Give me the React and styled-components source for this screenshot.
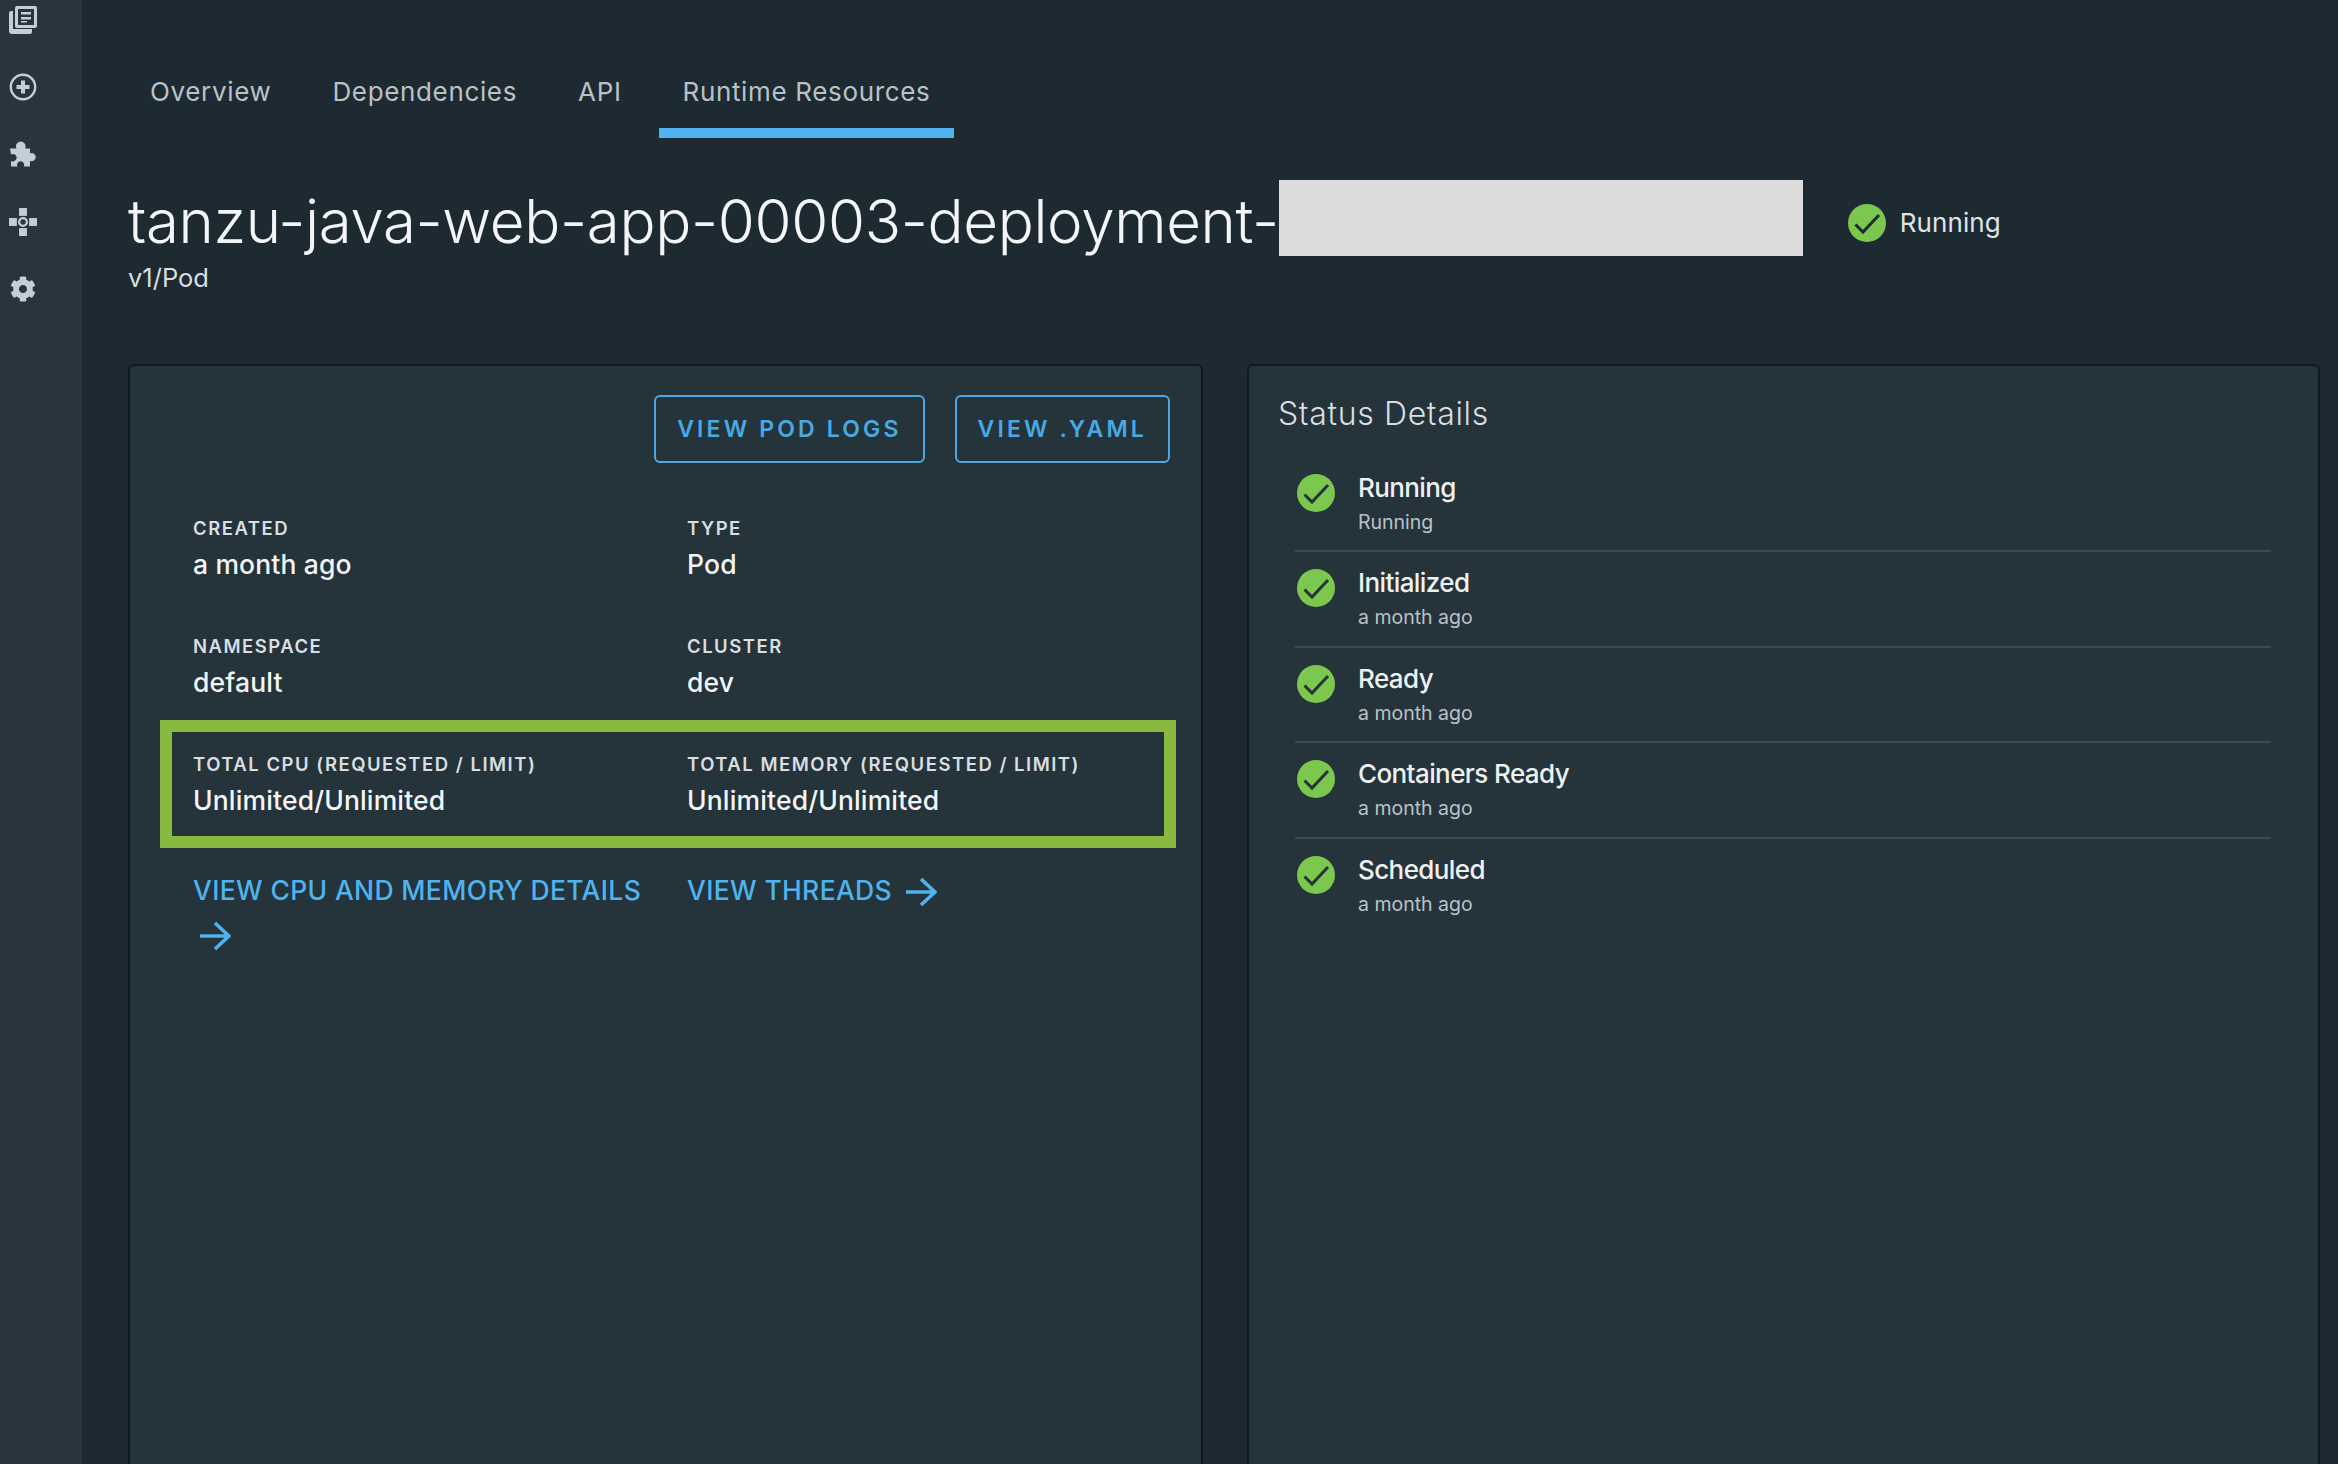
import React from "react";
import styled, { createGlobalStyle } from "styled-components";
import { FaCog } from "react-icons/fa";

const Global = createGlobalStyle`
  html, body { margin: 0; padding: 0; background: #1e2a32; }
  * { box-sizing: border-box; }
`;

const Shell = styled.div`
  display: flex;
  width: 2338px;
  height: 1464px;
  overflow: hidden;
  background: #1e2a32;
  font-family: "Inter", "Liberation Sans", sans-serif;
  color: #e6eaec;
`;
const Sidebar = styled.nav`
  flex: 0 0 82px;
  background: #28353c;
  padding: 6px 0 0 9px;
  display: flex;
  flex-direction: column;
  gap: 39.2px;
  color: #c3ced6;
`;
const SideIcon = styled.div`
  width: 28px;
  height: 28px;
  display: flex;
  align-items: center;
  justify-content: center;
`;
const Main = styled.main`
  flex: 1;
  min-width: 0;
  padding: 0 18px 0 46px;
`;
const Tabs = styled.div`
  display: flex;
  gap: 13px;
  padding-top: 75px;
  margin-left: -2px;
`;
const Tab = styled.div`
  padding: 0 24px 19px;
  font-size: 26px;
  line-height: 34px;
  font-weight: 400;
  letter-spacing: 0.65px;
  color: #b9c2c7;
  border-bottom: 10px solid ${p => (p.$active ? "#4fb3ef" : "transparent")};
`;
const TitleRow = styled.div`
  display: flex;
  align-items: center;
  margin-top: 42px;
  height: 76px;
`;
const Title = styled.h1`
  margin: 6px 0 0;
  font-size: 60px;
  line-height: 76px;
  font-weight: 300;
  letter-spacing: -0.35px;
  color: #f3f5f6;
  white-space: nowrap;
`;
const Redacted = styled.div`
  width: 524px;
  height: 76px;
  background: #dcdcdc;
  flex: none;
`;
const StatusBadge = styled.div`
  display: flex;
  align-items: center;
  gap: 14px;
  margin: 10px 0 0 45px;
  font-size: 26px;
  line-height: 34px;
  letter-spacing: 0.1px;
  color: #dfe4e7;
`;
const Kind = styled.div`
  margin-top: 6px;
  font-size: 25.5px;
  line-height: 32px;
  color: #d8dee1;
`;
const Panels = styled.div`
  display: grid;
  grid-template-columns: 1075px 1073px;
  gap: 44px;
  margin-top: 70px;
`;
const Panel = styled.section`
  background: #25333b;
  border: 2px solid #10191f;
  border-radius: 6px;
  height: 1200px;
`;
const LeftPanel = styled(Panel)`
  padding: 29px 31px 0 31px;
`;
const RightPanel = styled(Panel)`
  padding: 28px 47px 0 29px;
`;
const Actions = styled.div`
  display: flex;
  justify-content: flex-end;
  gap: 30px;
`;
const OutlineButton = styled.button`
  height: 68px;
  padding: 0 21px;
  background: transparent;
  border: 2px solid #49aae3;
  border-radius: 6px;
  color: #49aae3;
  font-family: inherit;
  font-size: 23px;
  font-weight: 600;
  letter-spacing: 3.15px;
  white-space: nowrap;
`;
const FieldGrid = styled.div`
  display: grid;
  grid-template-columns: 494px 1fr;
  row-gap: 53px;
  margin: 53px 0 0 32px;
`;
const Field = styled.div`
  display: flex;
  flex-direction: column;
  gap: 7px;
`;
const Label = styled.div`
  font-size: 18.5px;
  line-height: 24px;
  font-weight: 600;
  letter-spacing: 1.5px;
  color: #d8dee1;
  white-space: nowrap;
`;
const Value = styled.div`
  font-size: 26.5px;
  line-height: 34px;
  font-weight: 500;
  letter-spacing: 0.15px;
  color: #f3f5f6;
  white-space: nowrap;
`;
const Highlight = styled.div`
  display: grid;
  grid-template-columns: 494px 1fr;
  margin: 21px -6px 0 -1px;
  padding: 20px 0 19px 21px;
  border: 12px solid #86b93e;
`;
const Links = styled.div`
  display: grid;
  grid-template-columns: 474px 1fr;
  column-gap: 20px;
  margin: 20px 0 0 32px;
`;
const MoreLink = styled.a`
  font-size: 26.5px;
  line-height: 44px;
  font-weight: 500;
  letter-spacing: 0.35px;
  color: #4fb3ef;
`;
const ArrowSvg = styled.svg`
  display: inline-block;
  width: 32px;
  height: 30px;
  margin-left: 6px;
  vertical-align: -7px;
`;
const PanelTitle = styled.h2`
  margin: 0;
  font-size: 32px;
  line-height: 40px;
  font-weight: 300;
  letter-spacing: 0.65px;
  color: #d8dee1;
`;
const Conditions = styled.ul`
  list-style: none;
  margin: 23px 0 0 17px;
  padding: 0;
`;
const Condition = styled.li`
  display: flex;
  gap: 23px;
  padding: 14px 0 15.4px 2px;
  border-bottom: 2px solid ${p => (p.$last ? "transparent" : "#3c4b53")};
`;
const ConditionIcon = styled.div`
  margin-top: 3px;
  flex: none;
  display: flex;
`;
const ConditionText = styled.div`
  display: flex;
  flex-direction: column;
  gap: 4px;
`;
const ConditionName = styled.div`
  font-size: 26px;
  line-height: 34px;
  font-weight: 500;
  letter-spacing: -0.6px;
  color: #eef1f3;
`;
const ConditionTime = styled.div`
  font-size: 19.5px;
  line-height: 26px;
  color: #b9c2c7;
`;

const Check = ({ bg = "#25333b" }) => (
  <svg width="38" height="38" viewBox="0 0 38 38">
    <circle cx="19" cy="19" r="19" fill="#7cc84f" />
    <path d="M7.5 20.5l7.5 7.5L31 11" fill="none" stroke={bg} strokeWidth="3" />
  </svg>
);
const Arrow = () => (
  <ArrowSvg viewBox="0 0 32 30" fill="none" stroke="#4fb3ef" strokeWidth="3.6">
    <path d="M1 15h28M16 2l14 13-14 13" />
  </ArrowSvg>
);
const BookIcon = () => (
  <svg width="28" height="28" viewBox="0 0 28 28" fill="currentColor">
    <path fillRule="evenodd" d="M8 0h18a2 2 0 0 1 2 2v18a2 2 0 0 1-2 2H8a2 2 0 0 1-2-2V2a2 2 0 0 1 2-2zm1 3v16h16V3zm3 3h10v2.5H12zm0 5h10v2.5H12zm0 4h6v1.6h-6z" />
    <path d="M0 7a2 2 0 0 1 2-2h2v18h19v3a2 2 0 0 1-2 2H3a3 3 0 0 1-3-3z" />
  </svg>
);
const PlusCircleIcon = () => (
  <svg width="28" height="28" viewBox="0 0 28 28" fill="none" stroke="currentColor">
    <circle cx="14" cy="14" r="12.2" strokeWidth="2.4" />
    <path d="M14 7.5v13M7.5 14h13" strokeWidth="4" />
  </svg>
);
const PuzzleIcon = () => (
  <svg width="28" height="28" viewBox="0 0 28 28" fill="currentColor">
    <path d="M1 8.5h6.5a4.8 4.8 0 1 1 8.6 0H21v5a4 4 0 1 1 0 7.2V26.5h-6.2a3.6 3.6 0 1 0-6.4 0H2v-5.6a3.7 3.7 0 1 0 0-6.4z" />
  </svg>
);
const NodesIcon = () => (
  <svg width="32" height="32" viewBox="0 0 32 32" fill="currentColor">
    <rect x="11.5" y="0" width="9" height="9" />
    <rect x="11.5" y="23" width="9" height="9" />
    <rect x="0" y="11.5" width="9" height="9" />
    <rect x="23" y="11.5" width="9" height="9" />
    <circle cx="16" cy="16" r="4.4" fill="none" stroke="currentColor" strokeWidth="2.6" />
  </svg>
);

const conditions = [
  ["Running", "Running"],
  ["Initialized", "a month ago"],
  ["Ready", "a month ago"],
  ["Containers Ready", "a month ago"],
  ["Scheduled", "a month ago"],
];
const fields = [
  ["CREATED", "a month ago"],
  ["TYPE", "Pod"],
  ["NAMESPACE", "default"],
  ["CLUSTER", "dev"],
];

export default function App() {
  return (
    <Shell>
      <Global />
      <Sidebar>
        <SideIcon><BookIcon /></SideIcon>
        <SideIcon><PlusCircleIcon /></SideIcon>
        <SideIcon><PuzzleIcon /></SideIcon>
        <SideIcon><NodesIcon /></SideIcon>
        <SideIcon><FaCog size={26} /></SideIcon>
      </Sidebar>
      <Main>
        <Tabs>
          <Tab>Overview</Tab>
          <Tab>Dependencies</Tab>
          <Tab>API</Tab>
          <Tab $active>Runtime Resources</Tab>
        </Tabs>
        <TitleRow>
          <Title>tanzu-java-web-app-00003-deployment-</Title>
          <Redacted />
          <StatusBadge><Check bg="#1e2a32" />Running</StatusBadge>
        </TitleRow>
        <Kind>v1/Pod</Kind>
        <Panels>
          <LeftPanel>
            <Actions>
              <OutlineButton>VIEW POD LOGS</OutlineButton>
              <OutlineButton>VIEW .YAML</OutlineButton>
            </Actions>
            <FieldGrid>
              {fields.map(([l, v]) => (
                <Field key={l}><Label>{l}</Label><Value>{v}</Value></Field>
              ))}
            </FieldGrid>
            <Highlight>
              <Field><Label>TOTAL CPU (REQUESTED / LIMIT)</Label><Value>Unlimited/Unlimited</Value></Field>
              <Field><Label>TOTAL MEMORY (REQUESTED / LIMIT)</Label><Value>Unlimited/Unlimited</Value></Field>
            </Highlight>
            <Links>
              <MoreLink>VIEW CPU AND MEMORY DETAILS <Arrow /></MoreLink>
              <MoreLink>VIEW THREADS <Arrow /></MoreLink>
            </Links>
          </LeftPanel>
          <RightPanel>
            <PanelTitle>Status Details</PanelTitle>
            <Conditions>
              {conditions.map(([n, t], i) => (
                <Condition key={n} $last={i === conditions.length - 1}>
                  <ConditionIcon><Check /></ConditionIcon>
                  <ConditionText>
                    <ConditionName>{n}</ConditionName>
                    <ConditionTime>{t}</ConditionTime>
                  </ConditionText>
                </Condition>
              ))}
            </Conditions>
          </RightPanel>
        </Panels>
      </Main>
    </Shell>
  );
}
